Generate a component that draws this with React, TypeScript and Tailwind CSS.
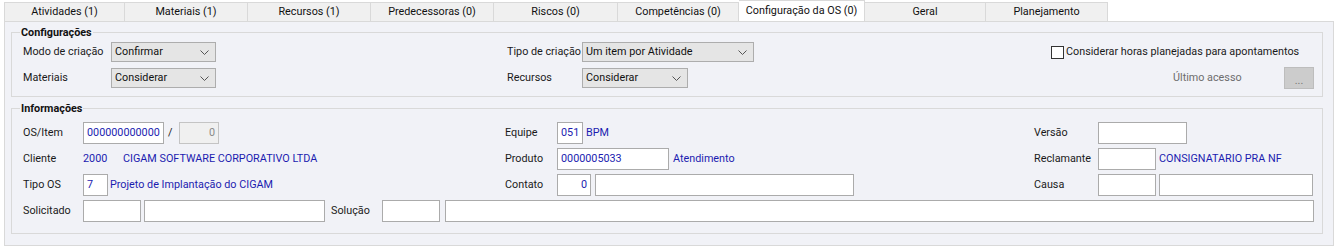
import React from "react";

const tabs: { label: string; w: number; active?: boolean }[] = [
  { label: "Atividades (1)", w: 121 },
  { label: "Materiais (1)", w: 123 },
  { label: "Recursos (1)", w: 123 },
  { label: "Predecessoras (0)", w: 123 },
  { label: "Riscos (0)", w: 124 },
  { label: "Competências (0)", w: 121 },
  { label: "Configuração da OS (0)", w: 126, active: true },
  { label: "Geral", w: 121 },
  { label: "Planejamento", w: 122 },
];

function Chevron() {
  return (
    <svg width="9" height="5" viewBox="0 0 9 5" className="shrink-0">
      <path d="M0.5 0.5 L4.5 4.5 L8.5 0.5" fill="none" stroke="#555" strokeWidth="1" />
    </svg>
  );
}

function Select({ w, value }: { w: number; value: string }) {
  return (
    <div
      className="h-[20px] border border-[#adadad] bg-[#e5e5e5] flex items-center justify-between pl-[3px] pr-[6px] text-[#111]"
      style={{ width: w }}
    >
      <span>{value}</span>
      <Chevron />
    </div>
  );
}

function Box({
  w,
  children,
  right,
  disabled,
}: {
  w: number;
  children?: React.ReactNode;
  right?: boolean;
  disabled?: boolean;
}) {
  return (
    <div
      className={
        "h-[22px] border flex items-center px-[3px] shrink-0 " +
        (disabled
          ? "bg-[#f0f0f0] border-[#c4c4c4] text-[#8a8a8a] justify-end"
          : "bg-white border-[#ababab] text-[#1c1cb0] " + (right ? "justify-end" : "justify-start"))
      }
      style={{ width: w }}
    >
      {children}
    </div>
  );
}

function Group({ title, children, className }: { title: string; children: React.ReactNode; className: string }) {
  return (
    <div className={"relative border border-[#d9d9d9] " + className}>
      <div className="absolute -top-[8px] left-[8px] px-[1px] bg-[#f1f2f7] font-bold text-[#111] leading-[15px]">
        {title}
      </div>
      {children}
    </div>
  );
}

export default function App() {
  return (
    <div className="w-[1335px] h-[249px] bg-white text-[10.8px] text-[#1a1a1a] font-['Roboto',sans-serif] whitespace-nowrap overflow-hidden">
      <div className="flex items-end h-[21px] pl-[4px]">
        {tabs.map((t, i) =>
          t.active ? (
            <div
              key={t.label}
              className="h-[21px] bg-white border-t border-r border-[#d9d9d9] flex items-center justify-center text-[#111]"
              style={{ width: t.w }}
            >
              {t.label}
            </div>
          ) : (
            <div
              key={t.label}
              className={
                "h-[19px] bg-[#f0f0f0] border-t border-r border-[#d9d9d9] flex items-center justify-center text-[#111] " +
                (i === 0 ? "border-l" : "")
              }
              style={{ width: t.w }}
            >
              {t.label}
            </div>
          )
        )}
      </div>
      <div className="ml-[4px] w-[1330px] h-[225px] border border-[#d9d9d9] bg-[#f1f2f7] pt-[10px] pl-[6px] pr-[10px]">
        <Group title="Configurações" className="pt-[9px] pb-[8px] pl-[11px] pr-[8px]">
          <div className="flex flex-col gap-[6px]">
            <div className="flex items-center h-[20px]">
              <div className="w-[484px] flex items-center">
                <span className="w-[88px]">Modo de criação</span>
                <Select w={105} value="Confirmar" />
              </div>
              <div className="w-[544px] flex items-center">
                <span className="w-[75px]">Tipo de criação</span>
                <Select w={172} value="Um item por Atividade" />
              </div>
              <div className="flex items-center">
                <div className="w-[13px] h-[13px] border border-[#333] bg-white mr-[2px]" />
                <span>Considerar horas planejadas para apontamentos</span>
              </div>
            </div>
            <div className="flex items-center h-[20px]">
              <div className="w-[484px] flex items-center">
                <span className="w-[88px]">Materiais</span>
                <Select w={105} value="Considerar" />
              </div>
              <div className="w-[544px] flex items-center">
                <span className="w-[75px]">Recursos</span>
                <Select w={106} value="Considerar" />
              </div>
              <div className="flex items-center">
                <span className="ml-[122px] w-[111px] text-[#6d6d6d]">Último acesso</span>
                <div className="w-[30px] h-[22px] bg-[#cccccc] border border-[#bdbdbd] flex items-end justify-center pb-[3px] text-[#777] leading-[8px]">
                  ...
                </div>
              </div>
            </div>
          </div>
        </Group>
        <Group title="Informações" className="mt-[11px] pt-[13px] pb-[11px] pl-[11px] pr-[8px]">
          <div className="flex flex-col gap-[4px]">
            <div className="flex items-center h-[22px]">
              <div className="w-[482px] flex items-center">
                <span className="w-[60px]">OS/Item</span>
                <Box w={81}>000000000000</Box>
                <span className="w-[15px] pl-[4px]">/</span>
                <Box w={40} disabled>
                  0
                </Box>
              </div>
              <div className="w-[529px] flex items-center">
                <span className="w-[52px]">Equipe</span>
                <Box w={26}>051</Box>
                <span className="ml-[3px] text-[#1c1cb0]">BPM</span>
              </div>
              <div className="flex items-center">
                <span className="w-[64px]">Versão</span>
                <Box w={89} />
              </div>
            </div>
            <div className="flex items-center h-[22px]">
              <div className="w-[482px] flex items-center">
                <span className="w-[60px]">Cliente</span>
                <span className="w-[40px] text-[#1c1cb0]">2000</span>
                <span className="text-[#1c1cb0]">CIGAM SOFTWARE CORPORATIVO LTDA</span>
              </div>
              <div className="w-[529px] flex items-center">
                <span className="w-[52px]">Produto</span>
                <Box w={112}>0000005033</Box>
                <span className="ml-[4px] text-[#1c1cb0]">Atendimento</span>
              </div>
              <div className="flex items-center">
                <span className="w-[64px]">Reclamante</span>
                <Box w={58} />
                <span className="ml-[3px] text-[#1c1cb0]">CONSIGNATARIO PRA NF</span>
              </div>
            </div>
            <div className="flex items-center h-[22px]">
              <div className="w-[482px] flex items-center">
                <span className="w-[60px]">Tipo OS</span>
                <Box w={25}>7</Box>
                <span className="ml-[2px] text-[#1c1cb0]">Projeto de Implantação do CIGAM</span>
              </div>
              <div className="w-[529px] flex items-center">
                <span className="w-[52px]">Contato</span>
                <Box w={34} right>
                  0
                </Box>
                <div className="ml-[4px]">
                  <Box w={259} />
                </div>
              </div>
              <div className="flex items-center">
                <span className="w-[64px]">Causa</span>
                <Box w={58} />
                <div className="ml-[3px]">
                  <Box w={154} />
                </div>
              </div>
            </div>
            <div className="flex items-center h-[22px]">
              <span className="w-[60px]">Solicitado</span>
              <Box w={58} />
              <div className="ml-[3px]">
                <Box w={181} />
              </div>
              <span className="w-[51px] ml-[6px]">Solução</span>
              <Box w={58} />
              <div className="ml-[5px] flex-1 h-[22px] border border-[#ababab] bg-white" />
            </div>
          </div>
        </Group>
      </div>
    </div>
  );
}
